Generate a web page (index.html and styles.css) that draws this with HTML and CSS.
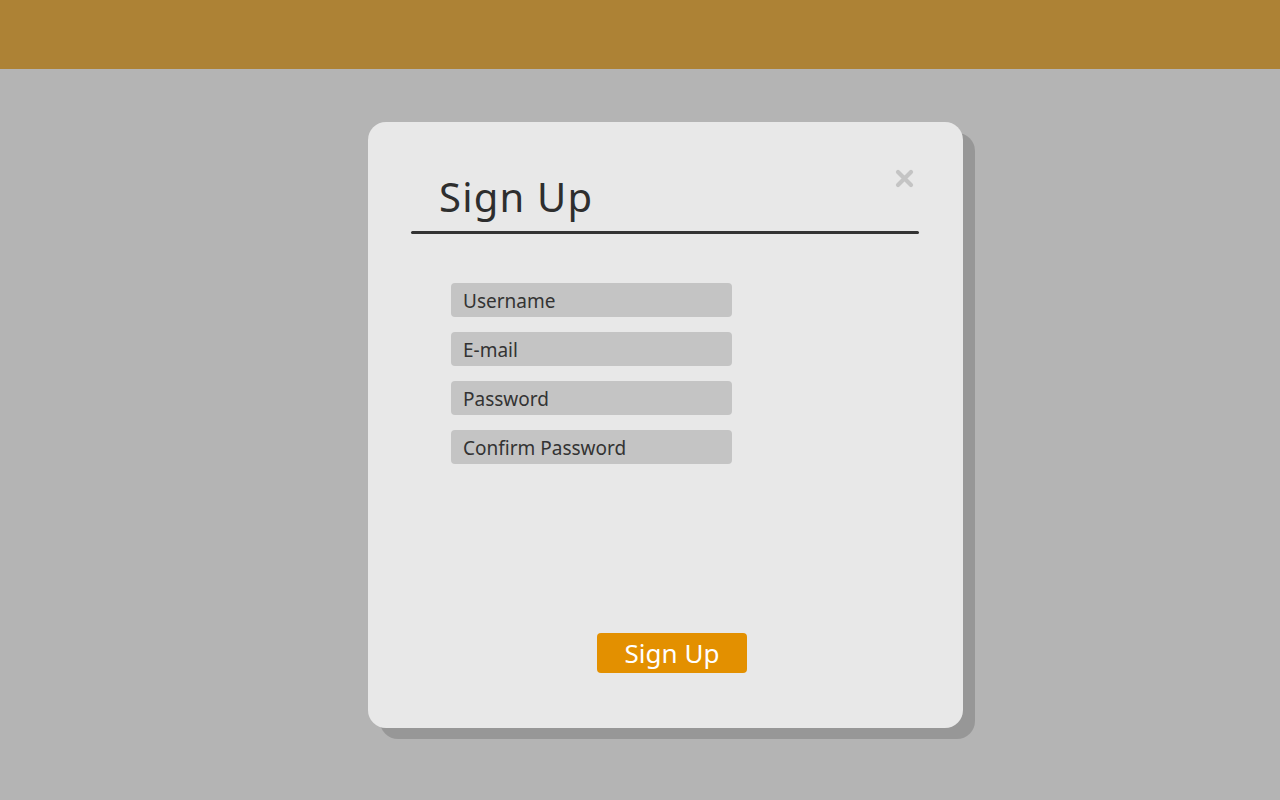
FILE: index.html
```html
<!DOCTYPE html>
<html>
<head>
<meta charset="utf-8">
<link rel="stylesheet" href="styles.css">
</head>
<body>
<header class="topbar"></header>
<main class="stage">
  <section class="modal">
    <div class="modal-head">
      <h1 class="title">Sign Up</h1>
      <span class="close">
        <svg width="19" height="19" viewBox="0 0 19 19"><path d="M3 3 L16 16 M16 3 L3 16" stroke="#c4c4c4" stroke-width="4.2" stroke-linecap="round"/></svg>
      </span>
    </div>
    <div class="rule"></div>
    <form class="fields">
      <div class="field">Username</div>
      <div class="field">E-mail</div>
      <div class="field">Password</div>
      <div class="field">Confirm Password</div>
    </form>
    <div class="actions">
      <button class="submit" type="button">Sign Up</button>
    </div>
  </section>
</main>
</body>
</html>
```

FILE: styles.css
```css
html, body {
  margin: 0;
  padding: 0;
  height: 100%;
}
body {
  background: #b4b4b4;
  font-family: "Noto Sans", "Liberation Sans", sans-serif;
  color: #333333;
  overflow: hidden;
}
.topbar {
  height: 69px;
  background: #ad8235;
}
.stage {
  padding: 53px 0 0 368px;
}
.modal {
  width: 595px;
  height: 606px;
  box-sizing: border-box;
  background: #e8e8e8;
  border-radius: 18px;
  box-shadow: 12px 11px 0 #979797;
  display: flex;
  flex-direction: column;
  padding: 0 44px 0 43px;
}
.modal-head {
  position: relative;
  height: 109px;
}
.title {
  margin: 0;
  padding: 49px 0 0 28px;
  font-weight: 400;
  font-size: 40px;
  line-height: 52px;
  color: #2e2e2e;
  letter-spacing: 1.2px;
}
.close {
  position: absolute;
  right: 5px;
  top: 47px;
  width: 19px;
  height: 19px;
}
.close svg { display: block; }
.rule {
  height: 3px;
  background: #333333;
  border-radius: 2px;
}
.fields {
  margin: 49px 0 0 40px;
  display: flex;
  flex-direction: column;
  gap: 15px;
}
.field {
  width: 281px;
  height: 34px;
  box-sizing: border-box;
  background: #c4c4c4;
  border-radius: 4px;
  padding: 0 12px;
  font-size: 19px;
  line-height: 36px;
  color: #333333;
}
.actions {
  margin-top: 169px;
  padding-left: 186px;
}
.submit {
  width: 150px;
  height: 40px;
  border: none;
  border-radius: 4px;
  background: #e39000;
  color: #ffffff;
  font-family: "Noto Sans", "Liberation Sans", sans-serif;
  font-size: 26px;
  line-height: 40px;
  padding: 0;
  cursor: pointer;
}
```
